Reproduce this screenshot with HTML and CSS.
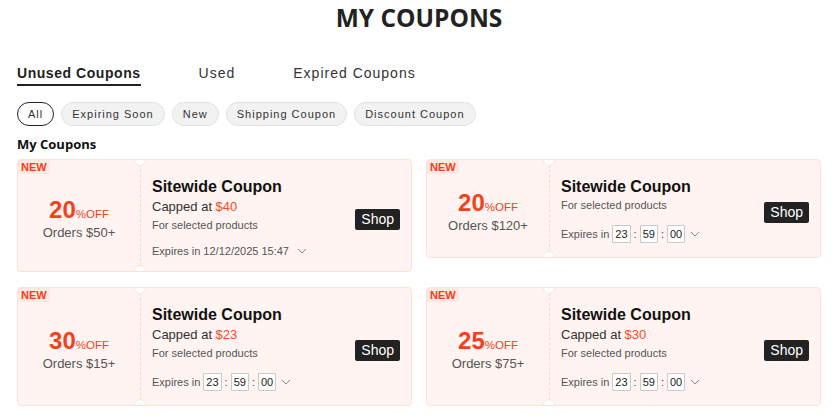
FILE: index.html
```html
<!DOCTYPE html>
<html lang="en">
<head>
<meta charset="utf-8">
<title>My Coupons</title>
<link rel="stylesheet" href="styles.css">
</head>
<body>
<div class="page">
  <h1 class="title">MY COUPONS</h1>
  <nav class="tabs">
    <span class="tab active">Unused Coupons</span>
    <span class="tab">Used</span>
    <span class="tab">Expired Coupons</span>
  </nav>
  <div class="chips">
    <span class="chip active">All</span>
    <span class="chip">Expiring Soon</span>
    <span class="chip">New</span>
    <span class="chip">Shipping Coupon</span>
    <span class="chip">Discount Coupon</span>
  </div>
  <h2 class="section">My Coupons</h2>
  <div class="grid">
    <div class="card">
      <span class="badge">NEW</span>
      <div class="left">
        <div class="deal"><span class="pct">20</span><span class="off">%OFF</span></div>
        <div class="orders">Orders $50+</div>
      </div>
      <div class="right">
        <div class="info">
          <div class="name">Sitewide Coupon</div>
          <div class="cap">Capped at <span class="red">$40</span></div>
          <div class="sel">For selected products</div>
          <div class="exp exp-text">Expires in 12/12/2025 15:47 <svg class="chev" viewBox="0 0 10 6" width="10" height="6"><path d="M1 1l4 4 4-4" fill="none" stroke="#888" stroke-width="1"/></svg></div>
        </div>
        <span class="shop">Shop</span>
      </div>
    </div>
    <div class="card">
      <span class="badge">NEW</span>
      <div class="left">
        <div class="deal"><span class="pct">20</span><span class="off">%OFF</span></div>
        <div class="orders">Orders $120+</div>
      </div>
      <div class="right">
        <div class="info">
          <div class="name">Sitewide Coupon</div>
          <div class="sel">For selected products</div>
          <div class="exp">Expires in <span class="box">23</span><span class="colon">:</span><span class="box">59</span><span class="colon">:</span><span class="box">00</span> <svg class="chev" viewBox="0 0 10 6" width="10" height="6"><path d="M1 1l4 4 4-4" fill="none" stroke="#888" stroke-width="1"/></svg></div>
        </div>
        <span class="shop">Shop</span>
      </div>
    </div>
    <div class="card">
      <span class="badge">NEW</span>
      <div class="left">
        <div class="deal"><span class="pct">30</span><span class="off">%OFF</span></div>
        <div class="orders">Orders $15+</div>
      </div>
      <div class="right">
        <div class="info">
          <div class="name">Sitewide Coupon</div>
          <div class="cap">Capped at <span class="red">$23</span></div>
          <div class="sel">For selected products</div>
          <div class="exp">Expires in <span class="box">23</span><span class="colon">:</span><span class="box">59</span><span class="colon">:</span><span class="box">00</span> <svg class="chev" viewBox="0 0 10 6" width="10" height="6"><path d="M1 1l4 4 4-4" fill="none" stroke="#888" stroke-width="1"/></svg></div>
        </div>
        <span class="shop">Shop</span>
      </div>
    </div>
    <div class="card">
      <span class="badge">NEW</span>
      <div class="left">
        <div class="deal"><span class="pct">25</span><span class="off">%OFF</span></div>
        <div class="orders">Orders $75+</div>
      </div>
      <div class="right">
        <div class="info">
          <div class="name">Sitewide Coupon</div>
          <div class="cap">Capped at <span class="red">$30</span></div>
          <div class="sel">For selected products</div>
          <div class="exp">Expires in <span class="box">23</span><span class="colon">:</span><span class="box">59</span><span class="colon">:</span><span class="box">00</span> <svg class="chev" viewBox="0 0 10 6" width="10" height="6"><path d="M1 1l4 4 4-4" fill="none" stroke="#888" stroke-width="1"/></svg></div>
        </div>
        <span class="shop">Shop</span>
      </div>
    </div>
  </div>
</div>
</body>
</html>
```
FILE: styles.css
```css
* { box-sizing: border-box; }
body {
  margin: 0;
  background: #fff;
  font-family: "Liberation Sans", Arial, sans-serif;
  color: #222;
}
.page {
  padding: 0 16px 0 17px;
}
.title {
  margin: 0;
  padding-top: 3px;
  text-align: center;
  font-family: "Open Sans", "Noto Sans", sans-serif;
  font-weight: 700;
  font-size: 24.5px;
  line-height: 30px;
  color: #222;
}
.tabs {
  display: flex;
  gap: 58px;
  margin-top: 32px;
}
.tab {
  font-size: 14px;
  letter-spacing: 1px;
  color: #333;
  line-height: 17px;
  padding-bottom: 2px;
  border-bottom: 2px solid transparent;
}
.tab.active {
  font-weight: 700;
  letter-spacing: 0.55px;
  color: #222;
  border-bottom-color: #222;
}
.chips {
  display: flex;
  gap: 7px;
  margin-top: 16px;
}
.chip {
  height: 24px;
  line-height: 22px;
  padding: 0 10px;
  font-size: 11px;
  letter-spacing: 1px;
  color: #333;
  background: #f2f2f2;
  border: 1px solid #e2e2e2;
  border-radius: 12px;
}
.chip.active {
  background: #fff;
  border-color: #222;
}
.section {
  margin: 9px 0 0;
  font-family: "Open Sans", "Noto Sans", sans-serif;
  font-weight: 700;
  font-size: 13px;
  line-height: 18px;
  color: #111;
}
.grid {
  display: grid;
  grid-template-columns: 1fr 1fr;
  column-gap: 14px;
  row-gap: 15px;
  align-items: start;
  margin-top: 6px;
}
.card {
  position: relative;
  display: flex;
  overflow: hidden;
  background: #fff4f1;
  border: 1px solid #fde2d4;
  border-radius: 4px;
}
.badge {
  position: absolute;
  left: 0;
  top: 0;
  padding: 0 3px;
  height: 14px;
  line-height: 14px;
  font-size: 11px;
  font-weight: 700;
  color: #fa3c1e;
  background: #ffe8e1;
  border-radius: 3px 0 3px 0;
  z-index: 1;
}
.left {
  position: relative;
  width: 123px;
  flex: none;
  display: flex;
  flex-direction: column;
  align-items: center;
  justify-content: center;
  padding-top: 11px;
  border-right: 1px dashed #fbd8c8;
}
.left::before,
.left::after {
  content: "";
  position: absolute;
  right: -6px;
  width: 10px;
  height: 10px;
  border-radius: 50%;
  background: #fff;
  border: 1px solid #fde2d4;
}
.left::before { top: -6px; }
.left::after { bottom: -6px; }
.deal {
  color: #f5401c;
  line-height: 20px;
}
.pct {
  font-size: 24px;
  font-weight: 700;
}
.off {
  font-size: 11.5px;
}
.orders {
  font-size: 13px;
  color: #555;
  line-height: 18px;
}
.right {
  flex: 1;
  display: flex;
  align-items: center;
  justify-content: space-between;
  padding: 17px 11px 12px 11px;
}
.info { display: flex; flex-direction: column; }
.name {
  font-size: 16px;
  font-weight: 700;
  color: #111;
  line-height: 20px;
}
.cap {
  font-size: 13px;
  color: #333;
  line-height: 20px;
}
.red { color: #fa4a26; }
.sel {
  font-size: 11px;
  color: #555;
  line-height: 17px;
}
.exp {
  display: flex;
  align-items: center;
  margin-top: 9px;
  font-size: 11px;
  color: #555;
  line-height: 22px;
  white-space: pre;
}
.exp-text { line-height: 16px; }
.box {
  display: inline-block;
  min-width: 18px;
  height: 18px;
  line-height: 16px;
  text-align: center;
  padding: 0 2px;
  font-size: 11px;
  color: #222;
  background: #fff;
  border: 1px solid #c9c9c9;
  border-radius: 1px;
}
.colon {
  padding: 0 3px;
  color: #444;
}
.chev {
  margin-left: 5px;
}
.shop {
  background: #222;
  color: #fff;
  font-size: 14px;
  line-height: 21px;
  padding: 0 6px;
  border-radius: 2px;
  margin-top: 3px;
}
```
